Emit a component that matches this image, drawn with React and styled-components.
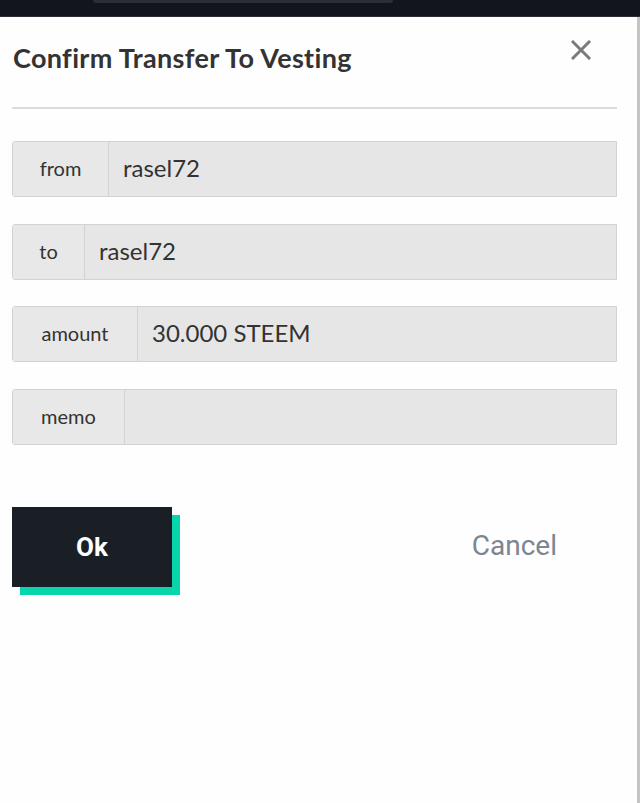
import React, { useState } from "react";
import styled, { createGlobalStyle } from "styled-components";

const GlobalStyle = createGlobalStyle`
  html, body {
    margin: 0;
    padding: 0;
    background: #fff;
  }
  body {
    font-family: "Lato", "Noto Sans", sans-serif;
  }
`;

const Page = styled.div`
  width: 640px;
  height: 803px;
  display: flex;
  flex-direction: column;
  overflow: hidden;
`;

const TopBar = styled.div`
  height: 16px;
  background: #12151c;
  border-bottom: 1px solid #2c2f36;
  display: flex;
  padding-left: 93px;
`;

const SearchEdge = styled.div`
  width: 300px;
  height: 3px;
  background: #2b2e36;
  border-radius: 0 0 14px 14px;
`;

const Body = styled.div`
  flex: 1;
  display: flex;
`;

const Panel = styled.div`
  flex: 1;
  background: #fefefe;
  padding: 0 20px 0 12px;
`;

const ScrollStrip = styled.div`
  width: 3px;
  background: #c4c4c4;
`;

const Header = styled.div`
  display: flex;
  justify-content: space-between;
  align-items: flex-start;
  height: 90px;
  border-bottom: 2px solid #dcdcdc;
`;

const Title = styled.h1`
  margin: 24px 0 0 1px;
  font-family: "Lato", sans-serif;
  font-weight: 700;
  font-size: 27px;
  color: #333;
  letter-spacing: 0.35px;
`;

const CloseButton = styled.button`
  margin: 22px 25px 0 0;
  padding: 0;
  border: 0;
  background: none;
  width: 22px;
  height: 22px;
  display: flex;
  align-items: center;
  justify-content: center;
  cursor: pointer;
`;

const Form = styled.div`
  display: flex;
  flex-direction: column;
  gap: 26.7px;
  margin-top: 32px;
`;

const InputGroup = styled.div`
  display: flex;
  height: 56px;
  border: 1px solid #d2d2d2;
  border-radius: 3px 0 0 3px;
  background: #e6e6e6;
  box-sizing: border-box;
`;

const Addon = styled.div`
  width: ${(p) => p.w}px;
  flex-shrink: 0;
  display: flex;
  align-items: center;
  justify-content: center;
  border-right: 1px solid #d2d2d2;
  background: #e8e8e8;
  font-family: "Lato", sans-serif;
  font-size: 20px;
  color: #333;
  padding-bottom: 2px;
  box-sizing: border-box;
`;

const Field = styled.input`
  flex: 1;
  min-width: 0;
  border: 0;
  outline: none;
  background: #e6e6e6;
  padding: 0 14px 3px;
  font-family: "Lato", sans-serif;
  font-size: 24px;
  color: #333;
`;

const Actions = styled.div`
  display: flex;
  align-items: center;
  margin-top: 62px;
`;

const OkButton = styled.button`
  width: 160px;
  height: 80px;
  border: 0;
  background: #1a1f26;
  box-shadow: 8px 8px 0 #06d6a9;
  color: #fff;
  font-family: "Roboto", sans-serif;
  font-weight: 700;
  font-size: 26px;
  cursor: pointer;
`;

const CancelButton = styled.button`
  margin-left: auto;
  margin-right: 60px;
  padding: 0 0 4px;
  border: 0;
  background: none;
  color: #7b8691;
  font-family: "Roboto", sans-serif;
  font-size: 28px;
  cursor: pointer;
`;

const rows = [
  { label: "from", width: 96, value: "rasel72" },
  { label: "to", width: 72, value: "rasel72" },
  { label: "amount", width: 125, value: "30.000 STEEM" },
  { label: "memo", width: 112, value: "" },
];

export default function App() {
  const [memo, setMemo] = useState("");

  return (
    <Page>
      <GlobalStyle />
      <TopBar>
        <SearchEdge />
      </TopBar>
      <Body>
        <Panel>
          <Header>
            <Title>Confirm Transfer To Vesting</Title>
            <CloseButton aria-label="close">
              <svg width="20" height="20" viewBox="0 0 20 20">
                <path d="M2 2 L18 18 M18 2 L2 18" stroke="#7a7a7a" strokeWidth="3" strokeLinecap="square" />
              </svg>
            </CloseButton>
          </Header>
          <Form>
            {rows.map((r) => (
              <InputGroup key={r.label}>
                <Addon w={r.width}>{r.label}</Addon>
                {r.label === "memo" ? (
                  <Field value={memo} onChange={(e) => setMemo(e.target.value)} />
                ) : (
                  <Field value={r.value} readOnly />
                )}
              </InputGroup>
            ))}
          </Form>
          <Actions>
            <OkButton>Ok</OkButton>
            <CancelButton>Cancel</CancelButton>
          </Actions>
        </Panel>
        <ScrollStrip />
      </Body>
    </Page>
  );
}
